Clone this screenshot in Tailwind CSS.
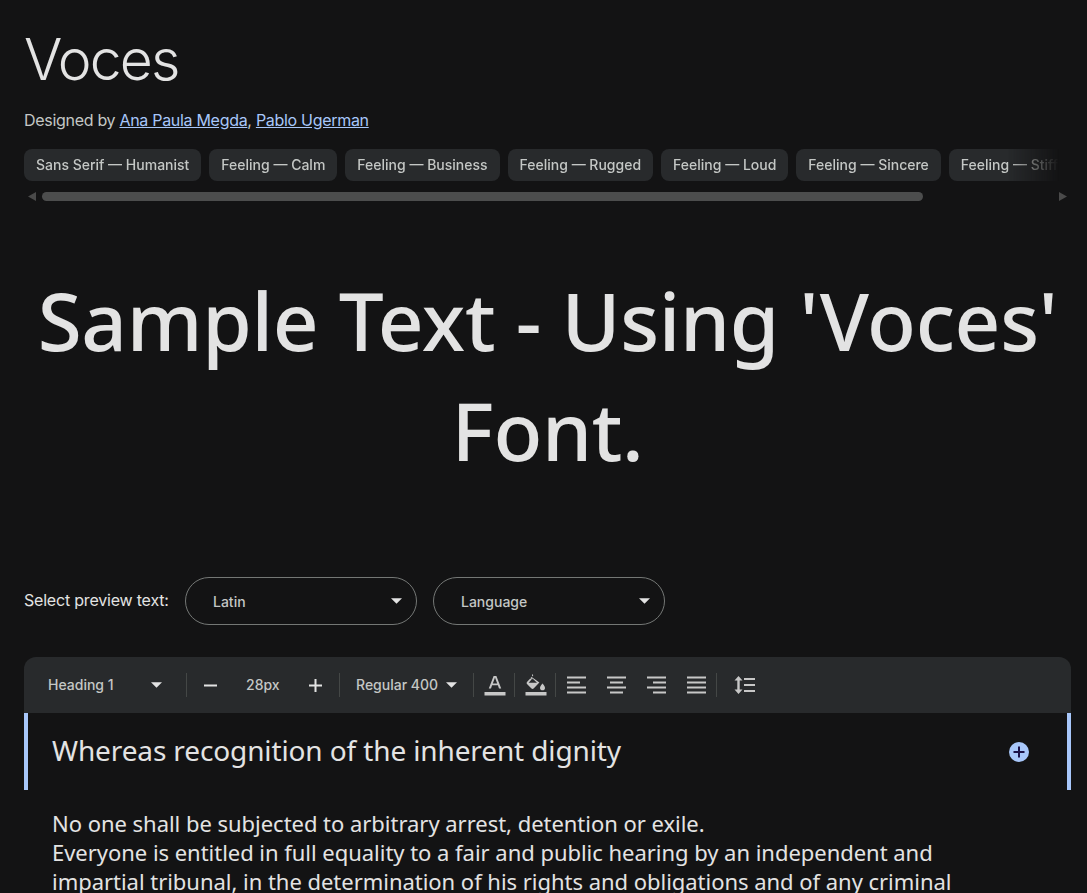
<!DOCTYPE html>
<html lang="en">
<head>
<meta charset="utf-8">
<title>Voces</title>
<script src="https://cdn.jsdelivr.net/npm/@tailwindcss/browser@4"></script>
</head>
<body class="bg-[#131314] overflow-hidden h-[893px] font-['Inter',sans-serif]">
<div class="h-[893px] overflow-hidden pl-6 pr-4">
  <h1 class="pt-[22px] h-[98px] text-[57px] leading-[76px] font-[350] tracking-[-1.8px] text-[#e3e3e3]">Voces</h1>
  <p class="h-[51px] text-[16px] leading-[44px] text-[#c4c7c5] tracking-[-0.3px]">Designed by <a class="text-[#a8c7fa] underline">Ana Paula Megda</a>, <a class="text-[#a8c7fa] underline">Pablo Ugerman</a></p>
  <div class="overflow-hidden">
    <div class="flex gap-2 h-8 [mask-image:linear-gradient(to_right,black_95%,transparent_100%)] w-[1035px] overflow-hidden">
      <span class="shrink-0 h-8 px-3 rounded-lg bg-[#282a2c] text-[#c4c7c5] text-[14px] leading-8 font-medium whitespace-nowrap">Sans Serif — Humanist</span>
      <span class="shrink-0 h-8 px-3 rounded-lg bg-[#282a2c] text-[#c4c7c5] text-[14px] leading-8 font-medium whitespace-nowrap">Feeling — Calm</span>
      <span class="shrink-0 h-8 px-3 rounded-lg bg-[#282a2c] text-[#c4c7c5] text-[14px] leading-8 font-medium whitespace-nowrap">Feeling — Business</span>
      <span class="shrink-0 h-8 px-3 rounded-lg bg-[#282a2c] text-[#c4c7c5] text-[14px] leading-8 font-medium whitespace-nowrap">Feeling — Rugged</span>
      <span class="shrink-0 h-8 px-3 rounded-lg bg-[#282a2c] text-[#c4c7c5] text-[14px] leading-8 font-medium whitespace-nowrap">Feeling — Loud</span>
      <span class="shrink-0 h-8 px-3 rounded-lg bg-[#282a2c] text-[#c4c7c5] text-[14px] leading-8 font-medium whitespace-nowrap">Feeling — Sincere</span>
      <span class="shrink-0 h-8 px-3 rounded-lg bg-[#282a2c] text-[#c4c7c5] text-[14px] leading-8 font-medium whitespace-nowrap">Feeling — Stiff</span>
    </div>
    <div class="mt-[11px] h-[9px] flex items-center">
      <svg class="ml-1 w-2 h-[9px] shrink-0" viewBox="0 0 8 9"><path d="M8 0V9L0 4.5Z" fill="#4a4a4a"/></svg>
      <div class="ml-[6px] w-[881px] h-[9px] rounded-full bg-[#4c4d4d]"></div>
      <svg class="ml-[136px] w-2 h-[9px] shrink-0" viewBox="0 0 8 9"><path d="M0 0V9L8 4.5Z" fill="#4a4a4a"/></svg>
    </div>
  </div>

  <div class="mt-[64px] h-[220px] text-center text-[80px] leading-[110px] text-[#e3e3e3] font-medium tracking-[-0.33px] font-['Noto_Sans',sans-serif]">Sample Text - Using 'Voces' Font.</div>

  <div class="mt-[92px] flex items-center h-12">
    <span class="w-[161px] text-[16px] text-[#e3e3e3] tracking-[-0.2px] -mt-[2px]">Select preview text:</span>
    <div class="w-[232px] h-12 rounded-3xl border border-[#747775] flex items-center justify-between pl-[27px] pr-[14px] text-[14px] font-medium text-[#c4c7c5]">
      <span>Latin</span>
      <svg class="w-[11px] h-[6px]" viewBox="0 0 10 5"><path d="M0 0H10L5 5Z" fill="#e3e3e3"/></svg>
    </div>
    <div class="ml-4 w-[232px] h-12 rounded-3xl border border-[#747775] flex items-center justify-between pl-[27px] pr-[14px] text-[14px] font-medium text-[#c4c7c5]">
      <span>Language</span>
      <svg class="w-[11px] h-[6px]" viewBox="0 0 10 5"><path d="M0 0H10L5 5Z" fill="#e3e3e3"/></svg>
    </div>
  </div>

  <div class="mt-8 h-14 rounded-t-xl bg-[#282a2c] flex items-center text-[14px] font-medium text-[#c4c7c5]">
    <span class="ml-6 w-[103px] pb-[2px]">Heading 1</span>
    <svg class="w-[11px] h-[6px]" viewBox="0 0 10 5"><path d="M0 0H10L5 5Z" fill="#e3e3e3"/></svg>
    <span class="ml-[24px] w-px h-6 bg-[#444746]"></span>
    <svg class="ml-[17px] w-[13px] h-[13px]" viewBox="0 0 13 13"><rect y="5.5" width="13" height="2" fill="#e3e3e3"/></svg>
    <span class="ml-[29px] w-[33px] pb-[2px]">28px</span>
    <svg class="ml-[30px] w-[13px] h-[13px]" viewBox="0 0 13 13"><path d="M0 5.5H5.5V0H7.5V5.5H13V7.5H7.5V13H5.5V7.5H0Z" fill="#e3e3e3"/></svg>
    <span class="ml-[17px] w-px h-6 bg-[#444746]"></span>
    <span class="ml-4 w-[90px] pb-[2px]">Regular 400</span>
    <svg class="w-[11px] h-[6px]" viewBox="0 0 10 5"><path d="M0 0H10L5 5Z" fill="#e3e3e3"/></svg>
    <span class="ml-[16px] w-px h-6 bg-[#444746]"></span>
    <svg class="ml-[10px] w-[22px] h-6" viewBox="0 0 22 24"><path d="M9.6 3H12.4L17.2 15.5H15L13.9 12.3H8.1L7 15.5H4.8ZM8.8 10.4H13.2L11 4.6Z" fill="#c7c7c7"/><rect x="0.5" y="19" width="21" height="3.5" fill="#c7c7c7"/></svg>
    <span class="ml-[8px] w-px h-6 bg-[#444746]"></span>
    <svg class="ml-[10px] w-[22px] h-6" viewBox="0 0 22 24"><path d="M7 1L8.3 2.3L6.6 4L14.4 9.4L8.6 15.6C8 16.2 7.1 16.2 6.5 15.6L2 11C1.5 10.4 1.5 9.6 2 9L5.2 5.4L7.8 7.3L5.5 5L7 3.5ZM3.6 9.8H12L7.5 5.4Z" fill="#c7c7c7"/><path d="M17.5 10.5C17.5 10.5 20 13.3 20 15C20 16.4 18.9 17.3 17.5 17.3C16.1 17.3 15 16.4 15 15C15 13.3 17.5 10.5 17.5 10.5Z" fill="#c7c7c7"/><rect x="0.5" y="19" width="21" height="3.5" fill="#c7c7c7"/></svg>
    <span class="ml-[8px] w-px h-6 bg-[#444746]"></span>
    <svg class="ml-[11px] w-[19px] h-[19px]" viewBox="0 0 19 19"><path d="M0 0.5H19V2.5H0ZM0 5.5H13V7.5H0ZM0 10.5H19V12.5H0ZM0 15.5H19V17.5H0Z" fill="#c7c7c7"/></svg>
    <svg class="ml-[21px] w-[19px] h-[19px]" viewBox="0 0 19 19"><path d="M0 0.5H19V2.5H0ZM3 5.5H16V7.5H3ZM0 10.5H19V12.5H0ZM3 15.5H16V17.5H3Z" fill="#c7c7c7"/></svg>
    <svg class="ml-[21px] w-[19px] h-[19px]" viewBox="0 0 19 19"><path d="M0 0.5H19V2.5H0ZM6 5.5H19V7.5H6ZM0 10.5H19V12.5H0ZM6 15.5H19V17.5H6Z" fill="#c7c7c7"/></svg>
    <svg class="ml-[21px] w-[19px] h-[19px]" viewBox="0 0 19 19"><path d="M0 0.5H19V2.5H0ZM0 5.5H19V7.5H0ZM0 10.5H19V12.5H0ZM0 15.5H19V17.5H0Z" fill="#c7c7c7"/></svg>
    <span class="ml-[10px] w-px h-6 bg-[#444746]"></span>
    <svg class="ml-[17px] w-[22px] h-5" viewBox="0 0 22 20"><path d="M4.5 1L8.5 5.5H5.7V14.5H8.5L4.5 19L0.5 14.5H3.3V5.5H0.5Z" fill="#c7c7c7"/><path d="M10 3H21V5H10ZM10 9H21V11H10ZM10 15H21V17H10Z" fill="#c7c7c7"/></svg>
  </div>

  <div class="h-[77px] border-x-4 border-[#a8c7fa] flex items-center justify-between pl-6 pr-[38px]">
    <div class="text-[28px] leading-[38px] text-[#e3e3e3] font-['Noto_Sans',sans-serif] tracking-[-0.12px] -mt-[4px]">Whereas recognition of the inherent dignity</div>
    <svg class="w-5 h-5" viewBox="0 0 20 20"><circle cx="10" cy="10" r="10" fill="#a8c7fa"/><path d="M4.5 9H9V4.5H11V9H15.5V11H11V15.5H9V11H4.5Z" fill="#1a1147"/></svg>
  </div>
  <div class="mt-[19px] pl-7 pr-[90px] text-[22px] leading-[29px] text-[#e3e3e3] font-['Noto_Sans',sans-serif] tracking-[-0.03px]">
    <p>No one shall be subjected to arbitrary arrest, detention or exile.</p>
    <p>Everyone is entitled in full equality to a fair and public hearing by an independent and impartial tribunal, in the determination of his rights and obligations and of any criminal</p>
  </div>
</div>
</body>
</html>
